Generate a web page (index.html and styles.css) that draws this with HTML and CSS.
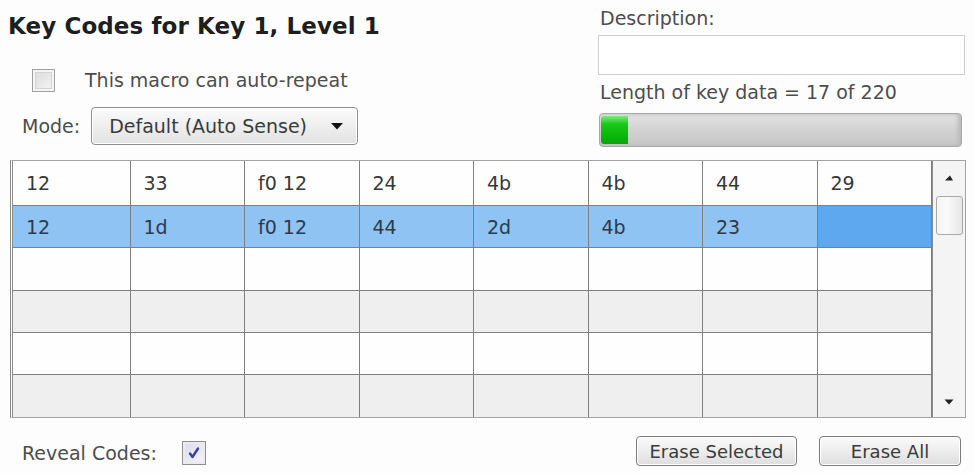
FILE: index.html
```html
<!DOCTYPE html>
<html>
<head>
<meta charset="utf-8">
<link rel="stylesheet" href="styles.css">
</head>
<body>
<div class="editor">
  <div class="top">
    <div class="top-left">
      <h1 class="title">Key Codes for Key 1, Level 1</h1>
      <label class="repeat-row">
        <span class="check"></span>
        <span class="label">This macro can auto-repeat</span>
      </label>
      <div class="mode-row">
        <span class="label">Mode:</span>
        <div class="select">
          <span>Default (Auto Sense)</span>
          <svg class="caret" width="12" height="8" viewBox="0 0 12 8"><path d="M0 1h12L6 7.5z" fill="#111"/></svg>
        </div>
      </div>
    </div>
    <div class="top-right">
      <div class="label">Description:</div>
      <div class="text-input"></div>
      <div class="label length">Length of key data = 17 of 220</div>
      <div class="meter"><div class="meter-fill" style="width: 27px"></div></div>
    </div>
  </div>

  <div class="grid-frame">
    <table class="codes">
      <colgroup>
        <col class="c-first"><col><col><col><col><col><col><col>
      </colgroup>
      <tr class="r-white r-first"><td>12</td><td>33</td><td>f0 12</td><td>24</td><td>4b</td><td>4b</td><td>44</td><td>29</td></tr>
      <tr class="r-selected"><td>12</td><td>1d</td><td>f0 12</td><td>44</td><td>2d</td><td>4b</td><td>23</td><td class="cursor"></td></tr>
      <tr class="r-white"><td></td><td></td><td></td><td></td><td></td><td></td><td></td><td></td></tr>
      <tr class="r-grey"><td></td><td></td><td></td><td></td><td></td><td></td><td></td><td></td></tr>
      <tr class="r-white"><td></td><td></td><td></td><td></td><td></td><td></td><td></td><td></td></tr>
      <tr class="r-grey"><td></td><td></td><td></td><td></td><td></td><td></td><td></td><td></td></tr>
    </table>
    <div class="scrollbar">
      <svg class="arrow" width="10" height="6" viewBox="0 0 10 6"><path d="M1 5.5L6 0.5L9 5.5z" fill="#222"/></svg>
      <div class="thumb"></div>
      <div class="track"></div>
      <svg class="arrow" width="10" height="6" viewBox="0 0 10 6"><path d="M0.5 0.5h9L5 5.5z" fill="#222"/></svg>
    </div>
  </div>

  <div class="bottom">
    <div class="reveal">
      <span class="label">Reveal Codes:</span>
      <span class="check checked">
        <svg width="14" height="14" viewBox="0 0 14 14"><path d="M3 7.5l2.5 3.5L11 2.5" fill="none" stroke="#3a3fa8" stroke-width="2.4" stroke-linecap="round" stroke-linejoin="round"/></svg>
      </span>
    </div>
    <div class="buttons">
      <button class="btn btn-sel">Erase Selected</button>
      <button class="btn btn-all">Erase All</button>
    </div>
  </div>
</div>
</body>
</html>
```

FILE: styles.css
```css
html, body {
  margin: 0;
  padding: 0;
  background: #fdfdfd;
}

body {
  font-family: "DejaVu Sans", Verdana, sans-serif;
  color: #444;
  width: 974px;
  height: 473px;
  overflow: hidden;
}

.editor {
  display: flex;
  flex-direction: column;
}

/* ---------- header area ---------- */
.top {
  display: flex;
  justify-content: space-between;
  height: 160px;
}

.top-left {
  padding-left: 8px;
  display: flex;
  flex-direction: column;
}

.title {
  margin: 12px 0 0 0;
  font-size: 23px;
  font-weight: bold;
  color: #1e1e1e;
  line-height: 28px;
  letter-spacing: 0.1px;
}

.label {
  font-size: 19px;
  line-height: 22px;
  color: #4d4d4d;
}

.repeat-row {
  display: flex;
  align-items: center;
  margin-top: 28px;
  padding-left: 24px;
  height: 24px;
}

.repeat-row .label {
  margin-left: 30px;
}

.check {
  width: 23px;
  height: 23px;
  box-sizing: border-box;
  border: 1px solid #a0a0a0;
  background: linear-gradient(135deg, #d8d8d8, #f6f6f6);
  box-shadow: inset 0 0 0 2px #f4f4f4, inset 0 0 0 3px #d4d4d4;
  display: inline-flex;
  align-items: center;
  justify-content: center;
}

.check.checked {
  width: 24px;
  height: 24px;
  border-color: #8e8e8e;
  background: linear-gradient(135deg, #dcdcec, #f4f4f8);
  box-shadow: inset 0 0 0 2px #eaeaf0;
}

.mode-row {
  display: flex;
  align-items: center;
  margin-top: 15px;
  padding-left: 14px;
}

.select {
  margin-left: 11px;
  width: 267px;
  height: 38px;
  box-sizing: border-box;
  border: 1px solid #8f8f8f;
  border-radius: 4px;
  background: linear-gradient(#fbfbfb, #ededed 55%, #e2e2e2);
  box-shadow: inset 0 0 0 1px #fff;
  display: flex;
  align-items: center;
  justify-content: space-between;
  padding: 0 14px 0 17px;
  font-size: 19px;
  color: #3a3a3a;
}

.caret {
  display: block;
}

.top-right {
  width: 367px;
  margin-right: 9px;
  padding-top: 7px;
  display: flex;
  flex-direction: column;
}

.top-right .label {
  padding-left: 2px;
}

.text-input {
  margin-top: 6px;
  height: 40px;
  box-sizing: border-box;
  border: 1px solid #cfcfcf;
  background: #fff;
}

.length {
  margin-top: 6px;
}

.meter {
  margin-top: 10px;
  margin-left: 1px;
  margin-right: 3px;
  height: 34px;
  box-sizing: border-box;
  border: 1px solid #a8a8a8;
  border-radius: 4px;
  background: linear-gradient(#e4e4e4, #d2d2d2 50%, #c6c6c6);
  box-shadow: inset -3px 0 4px #b8b8b8;
  padding: 2px 1px;
  display: flex;
}

.meter-fill {
  border-radius: 3px 0 0 3px;
  background: linear-gradient(#7ee87e, #19c719 30%, #07b307 80%, #10a010);
}

/* ---------- key code grid ---------- */
.grid-frame {
  margin-left: 10px;
  width: 956px;
  height: 258px;
  box-sizing: border-box;
  border: 1px solid #a3a3a3;
  border-left: 3px double #8c8c8c;
  display: flex;
  background: #fff;
}

.codes {
  border-collapse: collapse;
  table-layout: fixed;
  width: 919px;
  font-size: 19px;
  color: #383838;
}

.codes col.c-first {
  width: 117px;
}

.codes td {
  height: 42px;
  padding: 0 0 0 13px;
  border: 1px solid #7f7f7f;
  box-sizing: border-box;
  white-space: nowrap;
}

.codes tr:first-child td {
  border-top: none;
  height: 44px;
}

.codes td:first-child {
  border-left: none;
}

.codes tr:last-child td {
  border-bottom: none;
}

.r-white td {
  background: #fefefe;
}

.r-grey td {
  background: #efefef;
}

.r-selected td {
  background: #8fc3f3;
  color: #2c3a4a;
}

.r-selected td.cursor {
  background: #5ea8f0;
}

.scrollbar {
  flex: 1;
  border-left: 1px solid #8a8a8a;
  background: #f4f4f4;
  display: flex;
  flex-direction: column;
  align-items: center;
  padding: 14px 0 12px;
  box-sizing: border-box;
}

.scrollbar .arrow {
  display: block;
}

.thumb {
  margin-top: 15px;
  width: 27px;
  height: 39px;
  box-sizing: border-box;
  border: 1px solid #a9a9a9;
  border-radius: 3px;
  background: linear-gradient(90deg, #f4f4f4, #fafafa 40%, #e6e6e6);
}

.track {
  flex: 1;
}

/* ---------- footer ---------- */
.bottom {
  display: flex;
  justify-content: space-between;
  align-items: flex-start;
  height: 55px;
  padding: 0 13px 0 22px;
}

.reveal {
  display: flex;
  align-items: center;
  margin-top: 23px;
}

.reveal .check {
  margin-left: 25px;
}

.buttons {
  display: flex;
  gap: 22px;
  margin-top: 18px;
}

.btn {
  font-family: inherit;
  font-size: 18px;
  color: #3a3a3a;
  height: 30px;
  box-sizing: border-box;
  border: 1px solid #7c7c7c;
  border-radius: 4px;
  background: linear-gradient(#fafafa, #ededed 50%, #dedede);
  box-shadow: inset 0 0 0 1px #fff;
  padding: 0;
}

.btn-sel {
  width: 161px;
}

.btn-all {
  width: 142px;
}
```
